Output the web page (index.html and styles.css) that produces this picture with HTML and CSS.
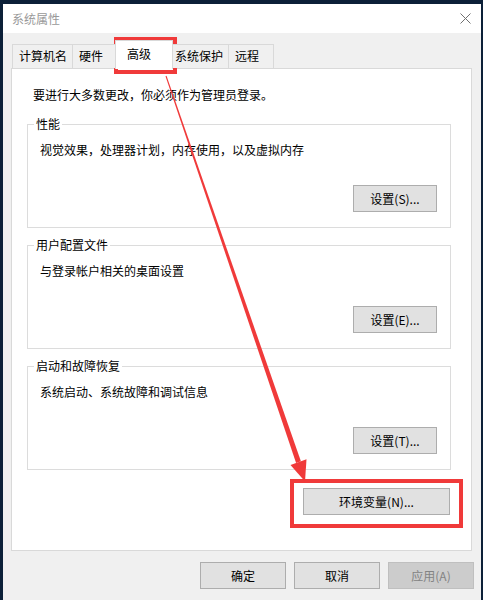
FILE: index.html
```html
<!DOCTYPE html>
<html lang="zh-CN">
<head>
<meta charset="utf-8">
<title>系统属性</title>
<link rel="stylesheet" href="styles.css">
</head>
<body>
<div class="window">
  <div class="titlebar">
    <span class="title">系统属性</span>
    <svg class="close" width="11" height="11" viewBox="0 0 11 11"><path d="M0.5 0.5L10.5 10.5M10.5 0.5L0.5 10.5"/></svg>
  </div>
  <div class="client">
    <div class="tabs">
      <div class="tab">计算机名</div>
      <div class="tab">硬件</div>
      <div class="tab active">高级</div>
      <div class="tab">系统保护</div>
      <div class="tab">远程</div>
    </div>
    <div class="panel">
      <p class="notice">要进行大多数更改，你必须作为管理员登录。</p>
      <fieldset class="group">
        <legend>性能</legend>
        <p class="desc">视觉效果，处理器计划，内存使用，以及虚拟内存</p>
        <button class="btn set">设置(S)...</button>
      </fieldset>
      <fieldset class="group">
        <legend>用户配置文件</legend>
        <p class="desc">与登录帐户相关的桌面设置</p>
        <button class="btn set">设置(E)...</button>
      </fieldset>
      <fieldset class="group">
        <legend>启动和故障恢复</legend>
        <p class="desc">系统启动、系统故障和调试信息</p>
        <button class="btn set">设置(T)...</button>
      </fieldset>
      <button class="btn env">环境变量(N)...</button>
    </div>
    <div class="footer">
      <button class="btn act">确定</button>
      <button class="btn act">取消</button>
      <button class="btn act" disabled>应用(A)</button>
    </div>
  </div>
</div>
<svg class="annot" width="483" height="600" viewBox="0 0 483 600">
  <rect x="116" y="39" width="59" height="33" class="mark"/>
  <rect x="292" y="481" width="169" height="45" class="mark"/>
  <polygon class="arrow" points="165.5,76.2 166.5,75.8 300.9,461.3 296.1,463.0"/>
  <polygon class="arrow" points="290.5,464.9 306.5,459.3 305,481.5"/>
</svg>
</body>
</html>
```
FILE: styles.css
```css
* { box-sizing: border-box; }
html, body { margin: 0; padding: 0; }
body {
  width: 483px;
  height: 600px;
  overflow: hidden;
  background: #0c2038;
  font-family: "Noto Sans CJK SC", "Microsoft YaHei", sans-serif;
  font-size: 12px;
  line-height: 16px;
  color: #000;
  position: relative;
}
.window {
  margin: 4px 2px 0 3px;
  height: 596px;
  background: #f0f0f0;
  overflow: hidden;
}
.titlebar {
  height: 29px;
  background: #fff;
  display: flex;
  align-items: center;
  justify-content: space-between;
  padding: 0 10px 0 9px;
}
.title { color: #999; }
.close { display: block; }
.close path { stroke: #707070; stroke-width: 1; fill: none; }
.client { padding: 7px 9px 0 8px; }
.tabs {
  display: flex;
  align-items: flex-end;
  height: 28px;
  padding-left: 1px;
  position: relative;
  z-index: 1;
}
.tab {
  height: 24px;
  line-height: 22px;
  padding: 0 5px 0 6px;
  min-width: 46px;
  border: 1px solid #d9d9d9;
  border-bottom: none;
  background: #f0f0f0;
  margin-left: -1px;
  white-space: nowrap;
}
.tab:first-child { margin-left: 0; }
.tab.active {
  background: #fff;
  height: 29px;
  line-height: 16px;
  padding: 5px 0 0 11px;
  width: 58px;
  margin: 0 -4px -1px -3px;
  position: relative;
  z-index: 2;
}
.panel {
  height: 483px;
  background: #fff;
  border: 1px solid #d9d9d9;
  padding: 18px 20px 0 15px;
}
.notice { margin: 0 0 13px 6px; }
.group {
  margin: 9px 0 0;
  padding: 0 13px 15px 6px;
  border: 1px solid #dcdcdc;
  min-width: 0;
}
.notice + .group { margin-top: 13px; }
.group legend { padding: 0 2px; line-height: 16px; }
.desc { margin: 10px 0 0 6px; }
.btn {
  font-family: inherit;
  font-size: 12px;
  line-height: 16px;
  color: #000;
  background: #e1e1e1;
  border: 1px solid #adadad;
  border-radius: 0;
  height: 27px;
  padding: 0;
  display: block;
}
.btn.set { width: 84px; margin: 27px 0 0 auto; }
.btn.env { width: 147px; margin: 18px 1px 0 auto; }
.footer {
  display: flex;
  justify-content: flex-end;
  gap: 8px;
  margin: 11px -2px 0 0;
}
.btn.act { width: 86px; }
.btn:disabled {
  background: #cccccc;
  border-color: #bfbfbf;
  color: #838383;
}
.annot {
  position: absolute;
  top: 0;
  left: 0;
  pointer-events: none;
}
.mark { fill: none; stroke: #f03a3a; stroke-width: 4; }
.arrow { fill: #f03a3a; }
```
